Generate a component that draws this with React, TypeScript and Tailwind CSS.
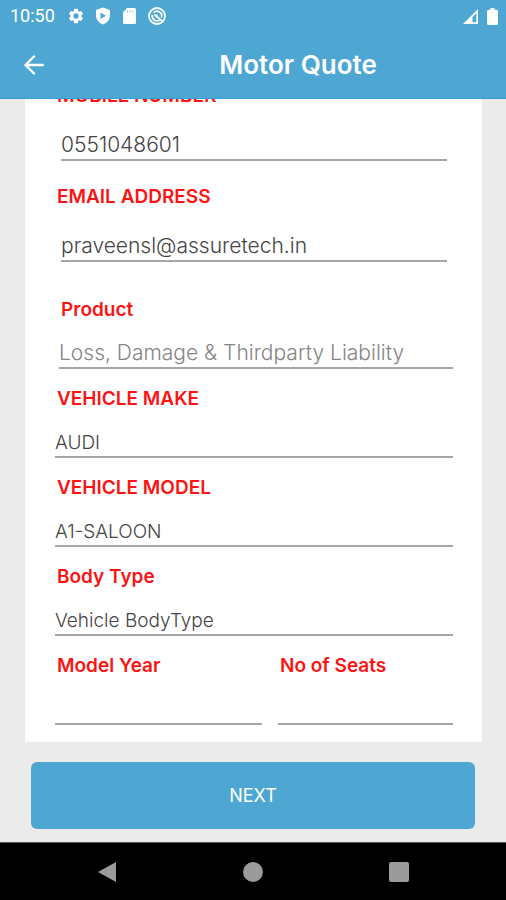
import React from 'react';
import { MdSettings } from 'react-icons/md';

type FieldProps = {
  id: string;
  label: string;
  value?: string;
  type?: string;
  labelClass?: string;
  inputClass?: string;
};

const Field: React.FC<FieldProps> = ({
  id,
  label,
  value = '',
  type = 'text',
  labelClass = 'pl-0.5',
  inputClass = 'h-[47px] pt-[18px] text-[19px] text-[#444444]',
}) => (
  <div className="flex min-w-0 flex-col">
    <label htmlFor={id} className={`text-[19px] leading-6 font-semibold text-[#fa1414] ${labelClass}`}>
      {label}
    </label>
    <input
      id={id}
      type={type}
      defaultValue={value}
      className={`min-w-0 border-b-2 border-[#a6a6a6] bg-transparent font-light outline-none ${inputClass}`}
    />
  </div>
);

const contactInput = 'ml-1.5 mr-1.5 h-[53px] pt-[22px] text-[21px] text-[#444444]';

const StatusBar: React.FC = () => (
  <div className="flex h-8 items-center pr-2 pl-2.5 text-white">
    <span className="w-[57px] font-['Roboto'] text-lg leading-8">10:50</span>
    <div className="flex flex-1 items-center gap-2.5">
      <MdSettings size={18} />
      <svg width="16" height="18" viewBox="0 0 16 18" fill="currentColor">
        <path fillRule="evenodd" d="M8 .5 15 3v5.5c0 4-2.800 7.300-7 9-4.200-1.700-7-5-7-9V3L8 .5Zm-2.500 5v6.500l5.500-3.200-5.500-3.300Z" />
      </svg>
      <svg width="16" height="18" viewBox="0 0 16 18" fill="currentColor">
        <path d="M6 1h7.500A1.500 1.500 0 0 1 15 2.500v13a1.500 1.500 0 0 1-1.500 1.500h-10A1.500 1.500 0 0 1 2 15.500V5.500L6 1Z" />
        <path d="M6.500 3.500v2M9.200 3.500v2M12 3.500v2" stroke="#4ea7d3" strokeOpacity="0.600" />
      </svg>
      <svg width="20" height="20" viewBox="0 0 20 20" fill="none" stroke="currentColor">
        <circle cx="10" cy="10" r="8" strokeWidth="1.800" />
        <path d="M6.600 6.600A4.800 4.800 0 0 1 14.500 11.500M12.500 14.100A4.800 4.800 0 0 1 5.400 8.700" strokeWidth="1.600" />
        <path d="m7.500 8.500 7.500 6.500" strokeWidth="1.800" />
        <circle cx="9.500" cy="10" r="1.500" fill="currentColor" stroke="none" />
      </svg>
    </div>
    <div className="flex items-center gap-2">
      <svg width="17" height="17" viewBox="0 0 17 17">
        <path d="M1 16 16 1v15H1Z" fill="currentColor" />
        <path d="M10.500 9 14.300 5.200v9h-3.800V9Z" fill="#4ea7d3" />
      </svg>
      <svg width="11" height="17" viewBox="0 0 11 17" fill="currentColor">
        <path d="M3.500 0h4v1.800h2A1.500 1.500 0 0 1 11 3.300v12.200a1.500 1.500 0 0 1-1.500 1.500h-8A1.500 1.500 0 0 1 0 15.500V3.300a1.500 1.500 0 0 1 1.500-1.500h2V0Z" />
      </svg>
    </div>
  </div>
);

const App: React.FC = () => {
  return (
    <div className="flex min-h-screen flex-col bg-[#ebebeb] font-['Inter',sans-serif]">
      <header className="border-b border-[#389dd0] bg-[#4ea7d3]">
        <StatusBar />
        <div className="flex h-[66px] items-center pl-6 text-white">
          <button type="button" aria-label="Back" className="w-[66px]">
            <svg
              width="20"
              height="20"
              viewBox="0 0 20 20"
              fill="none"
              stroke="currentColor"
              strokeWidth="2.400"
              strokeLinecap="round"
              strokeLinejoin="round"
            >
              <path d="M18.800 10H2M10 1.500 1.500 10l8.500 8.500" />
            </svg>
          </button>
          <h1 className="flex-1 text-center text-[26px] leading-8 font-semibold">Motor Quote</h1>
        </div>
      </header>

      <main className="flex-1 overflow-hidden">
        {/* The form is scrolled a little way under the header */}
        <form className="-mt-[15px]">
          <div className="mr-6 ml-[25px] bg-white pr-[29px] pb-[17px] pl-[30px]">
            <div className="flex flex-col gap-6 pb-9">
              <Field id="mobile" label="MOBILE NUMBER" type="tel" value="0551048601" inputClass={contactInput} />
              <Field id="email" label="EMAIL ADDRESS" type="email" value="praveensl@assuretech.in" inputClass={contactInput} />
            </div>
            <div className="flex flex-col gap-[18px]">
              <Field
                id="product"
                label="Product"
                value="Loss, Damage & Thirdparty Liability"
                labelClass="pl-1.5"
                inputClass="ml-1 h-[47px] pt-4 text-[21px] text-[#858585]"
              />
              <Field id="make" label="VEHICLE MAKE" value="AUDI" />
              <Field id="model" label="VEHICLE MODEL" value="A1-SALOON" />
              <Field id="body" label="Body Type" value="Vehicle BodyType" />
              <div className="grid grid-cols-[207fr_175fr] gap-4">
                <Field id="year" label="Model Year" />
                <Field id="seats" label="No of Seats" />
              </div>
            </div>
          </div>

          <div className="px-[31px] pt-5 pb-3">
            <button
              type="button"
              className="h-[67px] w-full rounded-md bg-[#4ea7d3] text-lg font-normal text-white"
            >
              NEXT
            </button>
          </div>
        </form>
      </main>

      <nav className="flex h-[58px] items-center justify-around border-t border-[#555555] bg-black px-[34px] text-[#9b9b9b]">
        <button type="button" aria-label="Back">
          <svg width="20" height="22" viewBox="0 0 20 22" fill="currentColor">
            <path d="M19 1v20L1 11 19 1Z" />
          </svg>
        </button>
        <button type="button" aria-label="Home" className="size-5 rounded-full bg-[#9b9b9b]" />
        <button type="button" aria-label="Recent apps" className="size-5 rounded-xs bg-[#9b9b9b]" />
      </nav>
    </div>
  );
};

export default App;
